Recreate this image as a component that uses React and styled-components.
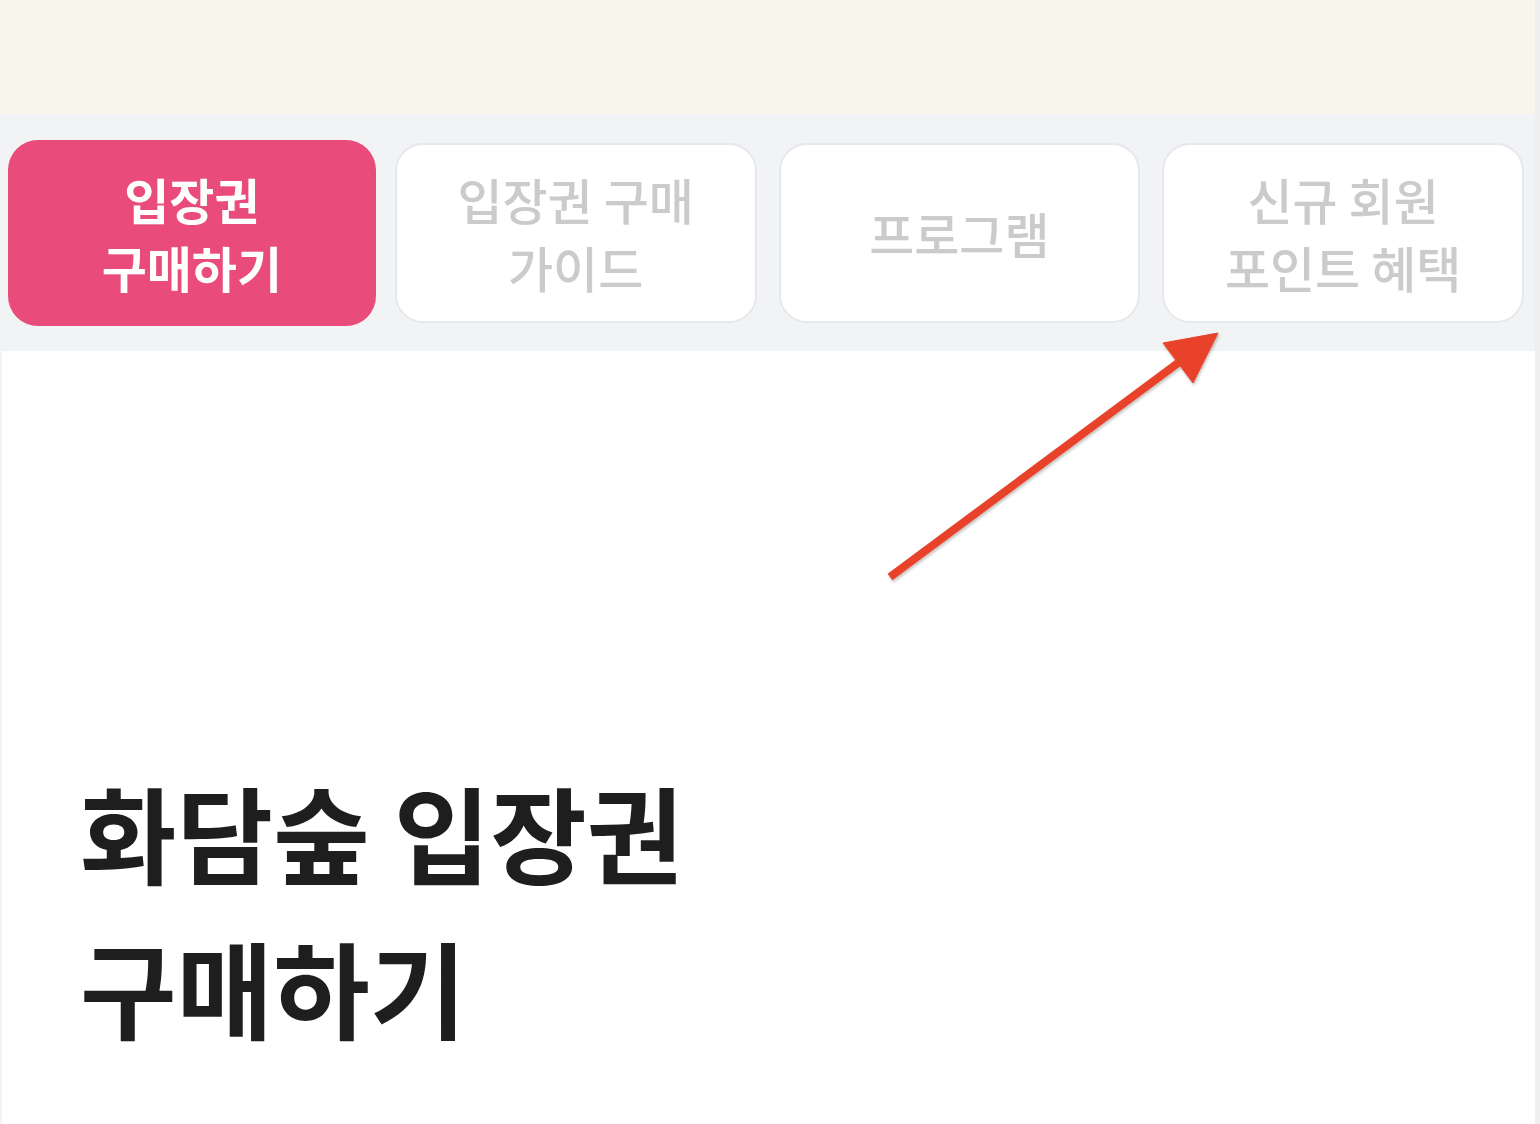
import React from "react"
import styled, { createGlobalStyle } from "styled-components"

const GlobalStyle = createGlobalStyle`
  html, body {
    margin: 0;
    padding: 0;
    background: #efefef;
  }
  body {
    font-family: "Noto Sans CJK KR", "Noto Sans", sans-serif;
  }
`

const Page = styled.div`
  position: relative;
  width: 1535px;
  min-height: 1124px;
  background: #ffffff;
  display: flex;
  flex-direction: column;
  overflow: hidden;
`

const Banner = styled.div`
  height: 114px;
  background: #f8f6eb;
`

const TabBar = styled.nav`
  display: grid;
  grid-template-columns: repeat(4, 1fr);
  gap: 16px;
  padding: 26px 8px 25px 8px;
  background: #f2f3f5;
`

const Tab = styled.button`
  box-sizing: border-box;
  height: ${p => (p.active ? "186px" : "180px")};
  margin: ${p => (p.active ? "0" : "3px")};
  border-radius: ${p => (p.active ? "30px" : "28px")};
  border: ${p => (p.active ? "none" : "2px solid #e6e8ec")};
  background: ${p => (p.active ? "#e94b7b" : "#ffffff")};
  color: ${p => (p.active ? "#ffffff" : "#cbcbcb")};
  font-family: "Noto Sans CJK KR", "Noto Sans", sans-serif;
  font-size: 49px;
  font-weight: ${p => (p.active ? 600 : 500)};
  line-height: 68px;
  display: flex;
  align-items: center;
  justify-content: center;
  text-align: center;
  padding: 0 10px;
  cursor: pointer;
`

const Content = styled.section`
  flex: 1;
  padding: 402px 0 60px 78px;
  border-left: 2px solid #f4f4f4;
`

const Title = styled.h1`
  margin: 0;
  font-family: "Noto Sans CJK KR", "Noto Sans", sans-serif;
  font-size: 105px;
  font-weight: 700;
  line-height: 155px;
  color: #1e1e1e;
`

const Pointer = styled.svg`
  position: absolute;
  left: 0;
  top: 0;
  width: 1540px;
  height: 1124px;
  pointer-events: none;
`

const tabs = [
  { label: ["입장권", "구매하기"], active: true },
  { label: ["입장권 구매", "가이드"] },
  { label: ["프로그램"] },
  { label: ["신규 회원", "포인트 혜택"] },
]

export default function App() {
  return (
    <>
      <GlobalStyle />
      <Page>
        <Banner />
        <TabBar>
          {tabs.map((t, i) => (
            <Tab key={i} active={t.active}>
              <span>
                {t.label.map((l, j) => (
                  <React.Fragment key={j}>
                    {j > 0 && <br />}
                    {l}
                  </React.Fragment>
                ))}
              </span>
            </Tab>
          ))}
        </TabBar>
        <Content>
          <Title>
            화담숲 입장권
            <br />
            구매하기
          </Title>
        </Content>
        <Pointer viewBox="0 0 1540 1124">
          <defs>
            <filter id="sh" x="-10%" y="-10%" width="120%" height="120%">
              <feDropShadow dx="1" dy="2" stdDeviation="1.5" floodOpacity="0.25" />
            </filter>
          </defs>
          <g filter="url(#sh)" fill="#e8432a" stroke="#e8432a">
            <line x1="890" y1="577" x2="1182" y2="360" strokeWidth="8" />
            <polygon points="1218,333 1163,343 1193,383" strokeWidth="1" />
          </g>
        </Pointer>
      </Page>
    </>
  )
}
